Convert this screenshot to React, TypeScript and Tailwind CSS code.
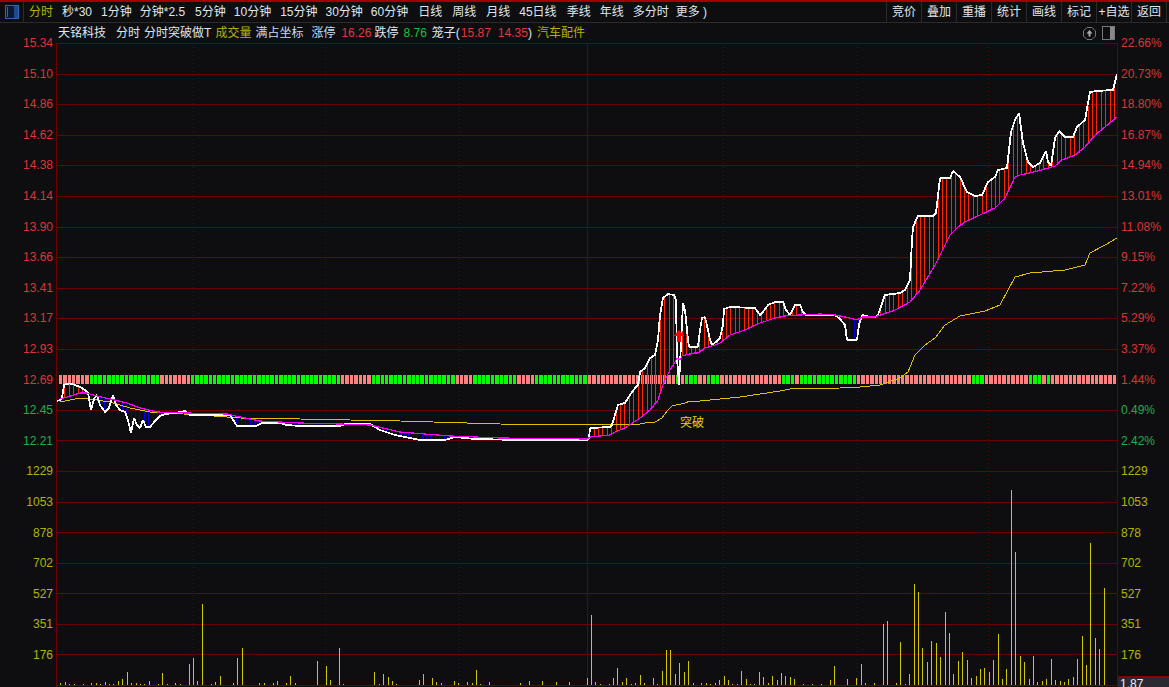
import React from 'react'

const FONT = '"Liberation Sans", "Noto Sans CJK SC", sans-serif'

const periods: [string, string][] = [
  ['秒*30', 'mr-[9px]'], ['1分钟', 'mr-[8px]'], ['分钟*2.5', 'mr-[10px]'], ['5分钟', 'mr-[8px]'], ['10分钟', 'mr-[9px]'], ['15分钟', 'mr-[8px]'],
  ['30分钟', 'mr-[8px]'], ['60分钟', 'mr-[10px]'], ['日线', 'mr-[10px]'], ['周线', 'mr-[10px]'], ['月线', 'mr-[9px]'], ['45日线', 'mr-[10px]'],
  ['季线', 'mr-[9px]'], ['年线', 'mr-[9px]'], ['多分时', 'mr-[7px]'], ['更多 )', ''],
]
const tools = ['竞价', '叠加', '重播', '统计', '画线', '标记', '+自选', '返回']

const RED = 'text-[#dc3535]'
const GREEN = 'text-[#1cae4c]'
const OLIVE = 'text-[#b4b400]'

const leftAxis: [string, string][] = [
  ['15.34', RED], ['15.10', RED], ['14.86', RED], ['14.62', RED], ['14.38', RED], ['14.14', RED], ['13.90', RED],
  ['13.66', RED], ['13.41', RED], ['13.17', RED], ['12.93', RED], ['12.69', RED], ['12.45', GREEN], ['12.21', GREEN],
  ['1229', OLIVE], ['1053', OLIVE], ['878', OLIVE], ['702', OLIVE], ['527', OLIVE], ['351', OLIVE], ['176', OLIVE],
]
const rightAxis: [string, string][] = [
  ['22.66%', RED], ['20.73%', RED], ['18.80%', RED], ['16.87%', RED], ['14.94%', RED], ['13.01%', RED], ['11.08%', RED],
  ['9.15%', RED], ['7.22%', RED], ['5.29%', RED], ['3.37%', RED], ['1.44%', RED], ['0.49%', GREEN], ['2.42%', GREEN],
  ['1229', OLIVE], ['1053', OLIVE], ['878', OLIVE], ['702', OLIVE], ['527', OLIVE], ['351', OLIVE], ['176', OLIVE],
]

const gridY = [43, 74, 104, 135, 165, 196, 227, 257, 288, 318, 349, 379, 410, 440, 471, 502, 532, 563, 593, 624, 654, 685]
const dottedX = [193, 325, 459, 723, 857, 988]

type Pt = [number, number]

const price: Pt[] = [
  [57, 401], [60, 400], [62, 398], [64, 385], [66, 384], [70, 383.5], [75, 385], [80, 387], [85, 390], [88, 393], [91, 410], [94, 399], [97, 395], [100, 405],
  [105, 412], [109, 408], [113, 395], [116, 405], [120, 410], [125, 412], [128, 420], [131, 433], [134, 418], [137, 425], [140, 428], [143, 420], [146, 427],
  [150, 427], [155, 421], [160, 416], [165, 414], [175, 413], [185, 411], [190, 415], [230, 415], [237, 426], [256, 426], [262, 423], [280, 423], [287, 425],
  [300, 426], [340, 426], [345, 424], [370, 424], [380, 430], [395, 435], [420, 440], [445, 440], [455, 437], [475, 439], [520, 440], [587, 440],
  [589, 438], [590, 428], [610, 427], [612, 425], [615, 415], [618, 405], [625, 403], [630, 395], [635, 388], [638, 385], [640, 372], [645, 368], [650, 358],
  [655, 355], [658, 340], [660, 315], [663, 298], [668, 294], [674, 295], [676, 300], [677, 358], [679, 385], [683, 303], [685, 310], [688, 340], [689, 347],
  [698, 347], [700, 330], [702, 318], [705, 317], [708, 330], [710, 340], [712, 345], [716, 342], [720, 338], [723, 325], [724, 309], [730, 307], [755, 308],
  [760, 315], [763, 312], [768, 305], [775, 302], [783, 302], [786, 310], [790, 315], [795, 305], [800, 305], [803, 312], [806, 315], [835, 315], [840, 319],
  [845, 325], [847, 340], [857, 340], [859, 325], [862, 315], [870, 317], [875, 317], [878, 315], [885, 295], [900, 293], [905, 290], [910, 280], [912, 240],
  [913, 227], [918, 216], [933, 216], [936, 213], [940, 178], [950, 178], [953, 171], [960, 177], [967, 192], [975, 196], [982, 195], [988, 182], [995, 177],
  [998, 170], [1007, 168], [1011, 132], [1015, 120], [1019, 113], [1023, 143], [1028, 162], [1033, 167], [1040, 163], [1046, 151], [1048, 162], [1051, 166],
  [1055, 138], [1059, 131], [1065, 137], [1073, 137], [1077, 127], [1085, 120], [1090, 92], [1097, 91], [1113, 90], [1117, 74],
]

const avg: Pt[] = [
  [60, 399], [67, 397], [80, 393], [87, 393], [93, 395], [110, 399], [127, 403], [140, 408], [157, 412], [187, 413], [227, 414], [240, 417], [260, 421],
  [300, 423], [340, 424], [370, 425], [400, 432], [450, 436], [500, 438], [587, 439], [590, 437], [610, 435], [615, 432], [625, 428], [640, 418], [650, 410],
  [658, 400], [660, 393], [665, 380], [670, 370], [675, 362], [677, 358], [680, 360], [682, 356], [685, 355], [695, 353], [698, 353], [705, 348], [715, 345],
  [720, 343], [730, 335], [745, 330], [760, 323], [775, 318], [785, 316], [800, 315], [820, 314], [835, 315], [850, 318], [857, 320], [862, 317], [875, 317],
  [895, 310], [910, 302], [920, 290], [935, 265], [945, 245], [950, 235], [958, 227], [965, 222], [980, 215], [995, 208], [1005, 198], [1015, 177], [1020, 175],
  [1030, 173], [1045, 169], [1055, 166], [1062, 160], [1075, 155], [1085, 147], [1095, 135], [1105, 127], [1117, 117],
]

const slow: Pt[] = [
  [60, 402], [70, 400], [80, 398], [90, 399], [110, 402], [130, 408], [150, 412], [200, 415], [240, 418], [300, 419], [400, 421], [500, 424], [587, 425], [610, 424],
  [640, 424], [645, 423], [655, 422], [662, 418], [668, 410], [672, 406], [685, 403], [690, 401], [700, 401], [720, 399], [740, 397], [760, 394], [780, 391],
  [790, 389], [840, 388], [860, 387], [880, 385], [900, 378], [908, 372], [915, 355], [925, 345], [935, 338], [945, 325], [960, 316], [985, 311], [1000, 305],
  [1008, 290], [1015, 277], [1030, 273], [1065, 270], [1085, 265], [1090, 253], [1105, 245], [1117, 238],
]

// x, height of each volume bar above the y=685 baseline
const volumes: Pt[] = [
  [60, 2], [65, 3], [69, 1], [74, 1], [83, 1], [91, 2], [96, 2], [100, 1], [105, 3], [109, 1], [113, 1], [118, 4], [122, 6], [127, 13], [131, 2], [136, 2], [140, 1], [144, 1],
  [149, 4], [158, 1], [162, 12], [167, 1], [175, 2], [180, 1], [189, 21], [193, 27], [197, 4], [202, 81], [211, 1], [215, 3], [220, 9], [233, 2], [237, 27], [242, 37],
  [259, 2], [264, 2], [273, 2], [277, 4], [286, 2], [290, 9], [295, 2], [317, 24], [326, 19], [330, 5], [339, 37], [343, 1], [374, 13], [379, 1], [383, 11], [388, 8], [392, 4],
  [396, 1], [419, 5], [423, 11], [432, 7], [436, 3], [441, 2], [454, 4], [458, 2], [467, 3], [472, 2], [476, 15], [480, 1], [489, 3], [520, 2], [529, 4], [542, 4], [556, 3],
  [569, 3], [587, 7], [591, 70], [595, 3], [600, 1], [609, 1], [613, 7], [617, 17], [622, 3], [626, 7], [631, 1], [635, 2], [640, 10], [644, 2], [653, 7], [657, 1], [662, 14],
  [666, 35], [670, 35], [675, 11], [679, 22], [684, 13], [688, 24], [693, 2], [701, 2], [706, 2], [710, 1], [715, 2], [719, 5], [724, 9], [728, 5], [732, 1], [737, 1], [741, 14],
  [746, 6], [750, 1], [754, 1], [759, 13], [763, 8], [768, 2], [772, 9], [777, 5], [781, 12], [785, 9], [790, 8], [794, 6], [803, 1], [812, 1], [821, 1], [830, 5], [834, 19],
  [847, 6], [856, 7], [861, 21], [865, 2], [874, 2], [883, 61], [887, 64], [896, 2], [900, 43], [905, 1], [909, 11], [914, 101], [918, 93], [922, 37], [927, 23], [931, 44],
  [936, 42], [940, 28], [945, 73], [949, 52], [953, 11], [958, 24], [962, 33], [967, 25], [971, 7], [976, 9], [980, 16], [984, 17], [989, 13], [993, 25], [998, 51], [1002, 6],
  [1006, 16], [1011, 195], [1015, 133], [1020, 29], [1024, 23], [1029, 6], [1033, 29], [1037, 3], [1042, 4], [1046, 6], [1051, 26], [1055, 5], [1060, 4], [1064, 3], [1068, 6],
  [1073, 8], [1077, 26], [1082, 49], [1086, 20], [1090, 142], [1095, 47], [1099, 36], [1104, 97], [1117, 140],
]

// pink / green runs of the signal row, 240 one-minute blocks
const runs: [string, number][] = [
  ['p', 7], ['g', 16], ['p', 7], ['g', 34], ['p', 7], ['g', 19], ['p', 4], ['g', 10], ['p', 4], ['g', 12], ['p', 20], ['g', 1], ['p', 1], ['g', 3], ['p', 2],
  ['g', 3], ['p', 14], ['g', 3], ['p', 1], ['g', 13], ['p', 26], ['g', 3], ['p', 10], ['g', 3], ['p', 1], ['g', 1], ['p', 15],
]
const blocks = runs.flatMap(([c, n]) => Array.from({ length: n }, () => c))

function valueAt(line: Pt[], x: number) {
  if (x <= line[0][0]) return line[0][1]
  for (let i = 1; i < line.length; i++) {
    if (x <= line[i][0]) {
      const [x0, y0] = line[i - 1]
      const [x1, y1] = line[i]
      return y0 + ((y1 - y0) * (x - x0)) / (x1 - x0 || 1)
    }
  }
  return line[line.length - 1][1]
}

const toPoints = (line: Pt[]) => line.map(([x, y]) => `${x},${y}`).join(' ')

function AxisColumn({ rows, align }: { rows: [string, string][]; align: string }) {
  return (
    <div className={`flex flex-col -mt-[15px] text-[12px] shrink-0 w-[56px] ${align}`}>
      {rows.map(([label, color], i) => (
        <div key={i} className={`h-[30.6px] leading-[30.6px] ${color}`}>
          {label}
        </div>
      ))}
    </div>
  )
}

function Chart() {
  const minutes = Array.from({ length: 240 }, (_, i) => 60 + i * 4.41)
  return (
    <svg width={1061} height={644} viewBox="56 43 1061 644" className="block">
      {gridY.map((y) => (
        <rect key={y} x={56} y={y} width={1061} height={1} fill="#6c0000" />
      ))}
      {dottedX.map((x) => (
        <line key={x} x1={x + 0.5} x2={x + 0.5} y1={43} y2={685} stroke="#6c0000" strokeDasharray="1 3" />
      ))}
      <rect x={56} y={43} width={1} height={644} fill="#6c0000" />
      <rect x={587} y={43} width={1} height={642} fill="#6c0000" />

      {blocks.map((c, i) => {
        const x = Math.round(58.7 + i * 4.41)
        const next = Math.round(58.7 + (i + 1) * 4.41)
        return <rect key={i} x={x} y={375} width={next - x - 1} height={9} fill={c === 'p' ? '#ff8080' : '#00ff00'} />
      })}

      {minutes.map((x) => {
        const top = valueAt(price, x)
        const base = valueAt(avg, x)
        return (
          <rect
            key={x}
            x={Math.round(x)}
            y={Math.round(Math.min(top, base))}
            width={1}
            height={Math.round(Math.abs(base - top))}
            fill={top < base ? '#ff2400' : '#0000e6'}
          />
        )
      })}

      <polyline points={toPoints(slow)} fill="none" stroke="#e0c000" strokeWidth={1} shapeRendering="crispEdges" />
      <polyline points={toPoints(price)} fill="none" stroke="#ffffff" strokeWidth={1.8} strokeLinejoin="bevel" shapeRendering="crispEdges" />
      <polyline points={toPoints(avg)} fill="none" stroke="#ff00ff" strokeWidth={1.2} shapeRendering="crispEdges" />

      <path d="M679 330l-5.500 6h3.500v6h4v-6h3.500z" fill="#ff0000" />

      {volumes.map(([x, h]) => (
        <rect key={x} x={x} y={685 - h} width={1} height={h} fill="#d2c600" />
      ))}
    </svg>
  )
}

export default function App() {
  return (
    <div
      className="w-[1169px] h-[687px] overflow-hidden flex flex-col bg-[#0e0e11] text-[#dfe6ee] border-t-2 border-[#a00000]"
      style={{ fontFamily: FONT }}
    >
      <div className="h-[21px] shrink-0 flex items-center border-b border-[#2b2b2b] text-[12px]">
        <div className="w-[24px] h-full flex items-center justify-center border-r border-[#2b2b2b] shrink-0">
          <svg width="14" height="14" viewBox="0 0 14 14">
            <rect x="0.5" y="0.5" width="13" height="13" fill="#0b1a33" stroke="#2a66b4" />
            <rect x="9" y="1" width="4" height="12" fill="#1c4a8c" />
            <rect x="2" y="2" width="1" height="10" fill="#2a66b4" />
          </svg>
        </div>
        <div className="flex items-center pl-[5px]">
          <span className="text-[#b4b400] mr-[9px]">分时</span>
          {periods.map(([p, gap]) => (
            <span key={p} className={gap}>
              {p}
            </span>
          ))}
        </div>
        <div className="ml-auto mr-[2px] flex h-full border-l border-[#2b2b2b]">
          {tools.map((t) => (
            <div key={t} className="w-[35px] flex items-center justify-center border-r border-[#2b2b2b] whitespace-nowrap">
              {t}
            </div>
          ))}
        </div>
      </div>

      <div className="h-[20px] shrink-0 flex items-center pl-[58px] pr-[54px] text-[12px] whitespace-nowrap">
        <span>天铭科技</span>
        <span className="ml-[10px]">分时</span>
        <span className="ml-[4px]">分时突破做T</span>
        <span className="ml-[4px] text-[#b4b400]">成交量</span>
        <span className="ml-[4px] text-[#c6dcf0]">满占坐标</span>
        <span className="ml-[8px] text-[#c6dcf0]">涨停</span>
        <span className="ml-[6px] text-[#e03a3a]">16.26</span>
        <span className="ml-[3px]">跌停</span>
        <span className="ml-[5px] text-[#19c040]">8.76</span>
        <span className="ml-[5px]">笼子(</span>
        <span className="ml-[1px] text-[#e03a3a]">15.87</span>
        <span className="ml-[7px] text-[#e03a3a]">14.35</span>
        <span>)</span>
        <span className="ml-[5px] text-[#b4b400]">汽车配件</span>
        <div className="ml-auto flex items-center gap-[6px]">
          <svg width="13" height="13" viewBox="0 0 13 13">
            <path d="M4 .5h5L12.500 4v5L9 12.500H4L.5 9V4z" fill="none" stroke="#777" />
            <path d="M6.500 3L3.500 6.500H5.500V9.500H7.500V6.500H9.500z" fill="#aaa" />
          </svg>
          <svg width="13" height="14" viewBox="0 0 13 14">
            <rect x="0.5" y="0.5" width="12" height="13" fill="none" stroke="#777" />
            <rect x="8" y="1" width="4" height="12" fill="#888" />
          </svg>
        </div>
      </div>

      <div className="relative flex-1 flex">
        <AxisColumn rows={leftAxis} align="text-right pr-[3px]" />
        <Chart />
        <div className="absolute top-0 left-[1117px] h-full w-px bg-[#6c0000]" />
        <AxisColumn rows={rightAxis} align="pl-[4px] flex-1" />
        <span className="absolute left-[680px] top-[372px] text-[12px] leading-[16px] text-[#e6d800]">突破</span>
        <div className="absolute right-0 bottom-0 left-[1118px] h-[11px] bg-[#2a2a30] border-t border-[#800000] text-[12px] leading-[14px] pl-[2px] text-[#e8eef4]">
          1.87
        </div>
      </div>
    </div>
  )
}
